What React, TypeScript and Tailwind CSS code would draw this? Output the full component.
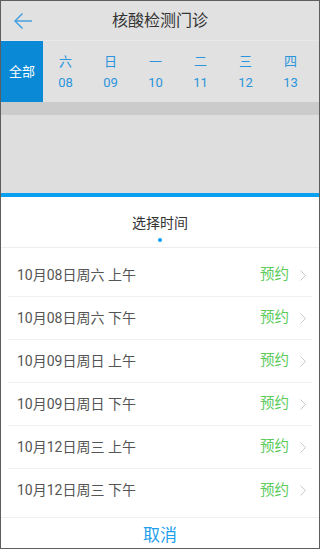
import React from "react";

const days = [
  { w: "六", d: "08" },
  { w: "日", d: "09" },
  { w: "一", d: "10" },
  { w: "二", d: "11" },
  { w: "三", d: "12" },
  { w: "四", d: "13" },
];

const slots = [
  "10月08日周六 上午",
  "10月08日周六 下午",
  "10月09日周日 上午",
  "10月09日周日 下午",
  "10月12日周三 上午",
  "10月12日周三 下午",
];

export default function App() {
  return (
    <div
      className="w-[320px] h-[549px] border border-[#5e5e5e] flex flex-col overflow-hidden bg-white"
      style={{ fontFamily: "Roboto, 'Noto Sans CJK SC', sans-serif" }}
    >
      {/* header */}
      <div className="h-[39px] shrink-0 bg-[#e1e1e1] relative flex items-center justify-center">
        <svg
          className="absolute left-[12px] top-[10px]"
          width="20"
          height="20"
          viewBox="0 0 20 20"
          fill="none"
          stroke="#3a9be0"
          strokeWidth="1.4"
        >
          <path d="M19 10H2" />
          <path d="M9.5 2.5L2 10l7.5 7.5" />
        </svg>
        <span className="text-[16px] text-[#333]">核酸检测门诊</span>
      </div>
      <div className="h-px shrink-0 bg-[#e8e8e8]" />

      {/* date tabs */}
      <div className="h-[61px] shrink-0 bg-[#e1e1e1] flex">
        <div className="w-[42px] bg-[#0a8ad6] flex items-center justify-center text-white text-[13px]">
          全部
        </div>
        {days.map((x) => (
          <div
            key={x.d}
            className="w-[45px] flex flex-col items-center justify-center gap-[8px] text-[#2a95dc] text-[13px] leading-none"
          >
            <span>{x.w}</span>
            <span>{x.d}</span>
          </div>
        ))}
      </div>

      <div className="h-[13px] shrink-0 bg-[#cbcbcb]" />
      <div className="h-[78px] shrink-0 bg-[#dedede]" />
      <div className="h-[4px] shrink-0 bg-[#0aa0f2]" />

      {/* sheet */}
      <div className="h-[50px] shrink-0 flex flex-col items-center pt-[19px]">
        <span className="text-[14px] leading-none text-[#333]">选择时间</span>
        <span className="mt-[8px] w-[4px] h-[4px] rounded-full bg-[#0a9cf0]" />
      </div>
      <div className="h-px shrink-0 bg-[#eeeeee]" />

      <div className="pt-[6px] pb-[5px] shrink-0">
        {slots.map((s, i) => (
          <div
            key={s}
            className={
              "h-[43px] mx-[7px] flex items-center " +
              (i < slots.length - 1 ? "border-b border-[#f0f0f0]" : "")
            }
          >
            <span className="ml-[9px] text-[14px] text-[#555]">{s}</span>
            <span className="ml-auto text-[14.5px] text-[#5ccb5c]">预约</span>
            <svg
              className="ml-[11px] mr-[6px]"
              width="6"
              height="11"
              viewBox="0 0 6 11"
              fill="none"
              stroke="#c8c8c8"
              strokeWidth="1"
            >
              <path d="M0.5 0.5L5.5 5.5L0.5 10.5" />
            </svg>
          </div>
        ))}
      </div>
      <div className="h-px shrink-0 bg-[#f0f0f0]" />
      <div className="flex-1 flex items-center justify-center pt-[5px]">
        <span className="text-[17px] text-[#1c9fec]">取消</span>
      </div>
    </div>
  );
}
